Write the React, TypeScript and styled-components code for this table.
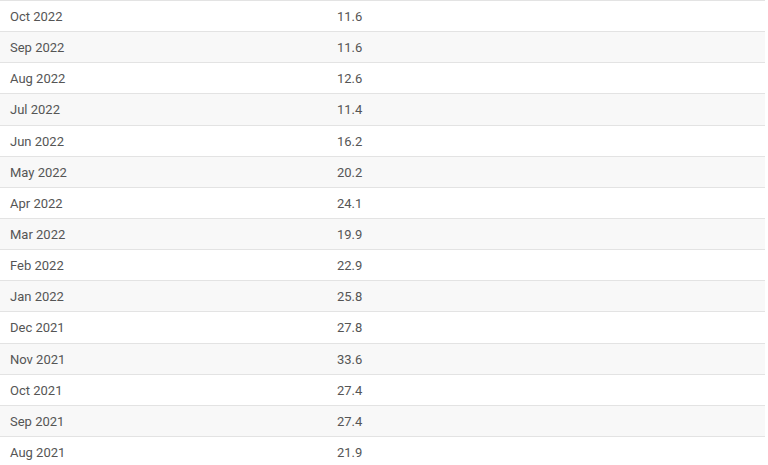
import { createGlobalStyle, styled } from 'styled-components'

const GlobalStyle = createGlobalStyle`
  body {
    margin: 0;
    background: #fff;
    font-family: Roboto, 'Liberation Sans', sans-serif;
  }
`

const Table = styled.div`
  width: 765px;
  display: flex;
  flex-direction: column;
`

const Row = styled.div<{ $shaded: boolean }>`
  display: grid;
  grid-template-columns: 337px 1fr;
  align-items: center;
  height: 31.15px;
  box-sizing: border-box;
  border-top: 1px solid #e3e3e3;
  background-color: ${(p) => (p.$shaded ? '#f8f8f8' : '#fff')};
`

const Cell = styled.div`
  font-size: 13px;
  color: #555;
  padding-top: 1px;
`

const DateCell = styled(Cell)`
  padding-left: 10px;
`

const rows = [
  ['Oct 2022', '11.6'],
  ['Sep 2022', '11.6'],
  ['Aug 2022', '12.6'],
  ['Jul 2022', '11.4'],
  ['Jun 2022', '16.2'],
  ['May 2022', '20.2'],
  ['Apr 2022', '24.1'],
  ['Mar 2022', '19.9'],
  ['Feb 2022', '22.9'],
  ['Jan 2022', '25.8'],
  ['Dec 2021', '27.8'],
  ['Nov 2021', '33.6'],
  ['Oct 2021', '27.4'],
  ['Sep 2021', '27.4'],
  ['Aug 2021', '21.9'],
]

const App = () => {
  return (
    <>
      <GlobalStyle />
      <Table>
        {rows.map(([date, value], i) => (
          <Row key={date} $shaded={i % 2 === 1}>
            <DateCell>{date}</DateCell>
            <Cell>{value}</Cell>
          </Row>
        ))}
      </Table>
    </>
  )
}

export default App
